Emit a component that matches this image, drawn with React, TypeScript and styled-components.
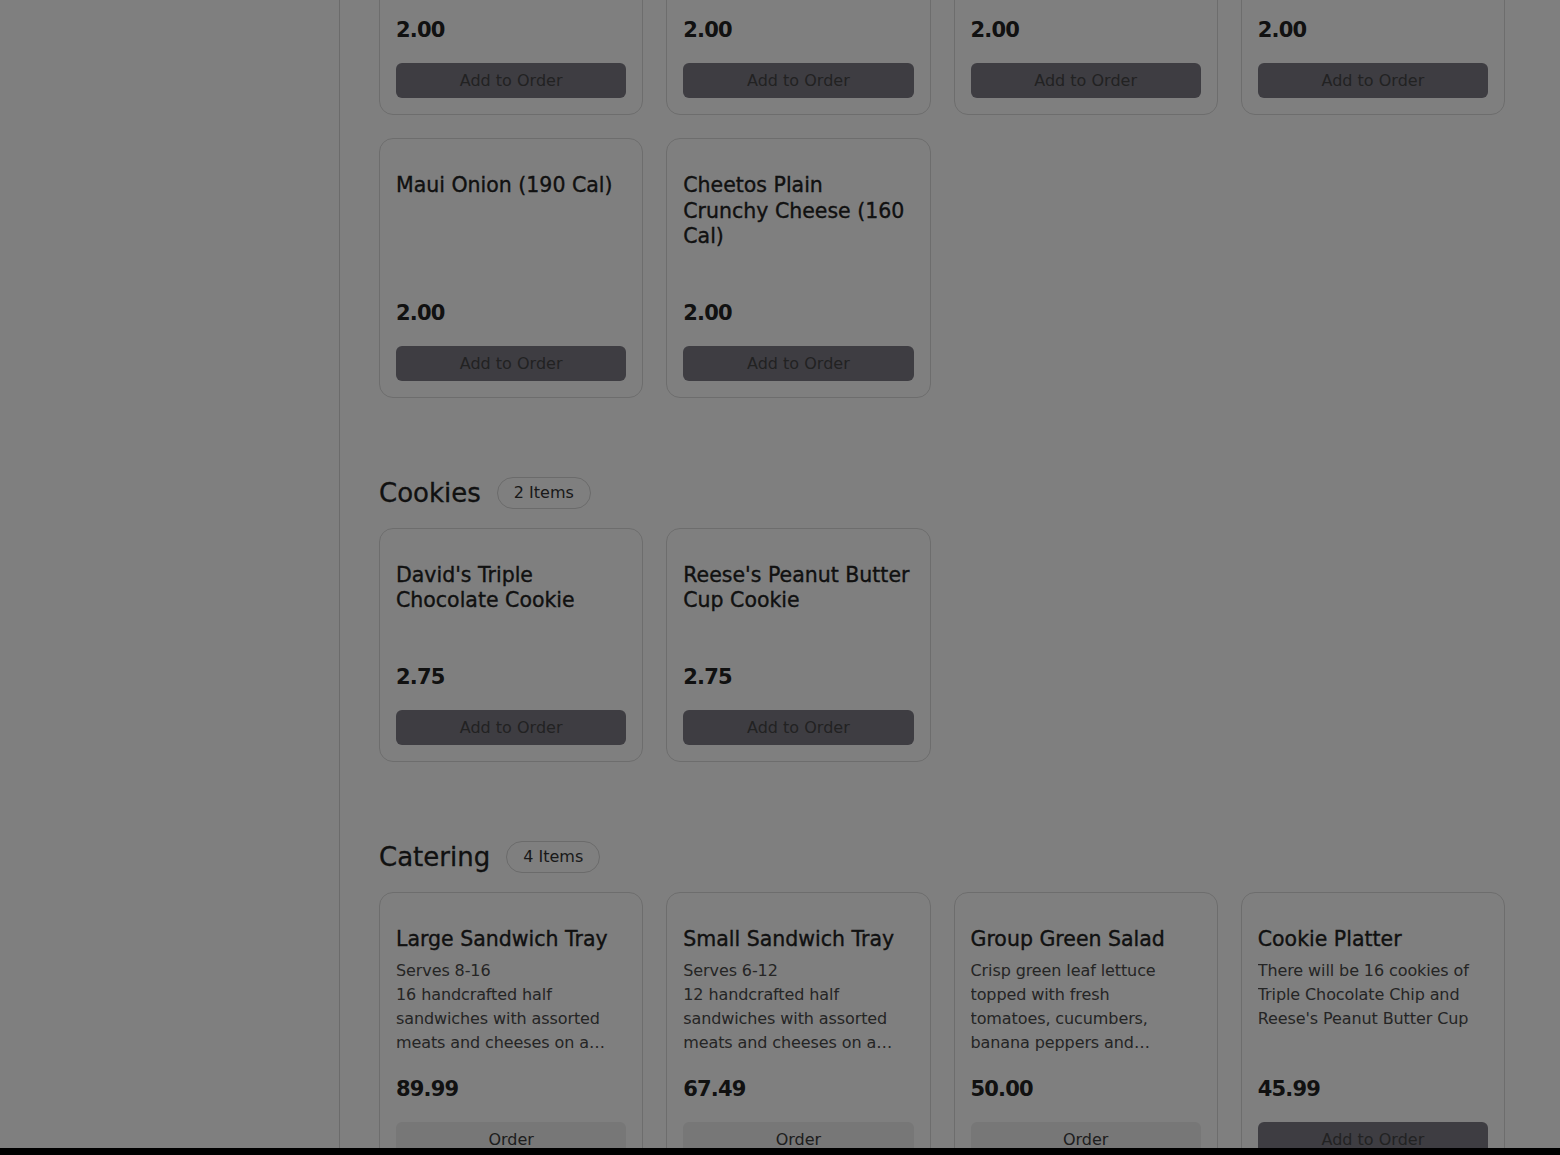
import React, { useLayoutEffect, useRef } from "react";
import styled, { createGlobalStyle } from "styled-components";

const Global = createGlobalStyle`
  html, body { margin: 0; padding: 0; height: 100%; overflow: hidden; }
  body { font-family: "DejaVu Sans", "Open Sans", sans-serif; background: #ffffff; color: #222222; }
  #root { height: 100%; }
  * { box-sizing: border-box; }
`;

const Shell = styled.div`
  display: flex;
  height: 100vh;
  background: #ffffff;
`;

const Sidebar = styled.aside`
  flex: 0 0 340px;
  border-right: 1px solid #d6d6d6;
  background: #ffffff;
`;

const Main = styled.main`
  flex: 1;
  overflow-y: auto;
  scrollbar-width: none;
  padding: 40px 55px 120px 39px;
  &::-webkit-scrollbar { display: none; }
`;

const Section = styled.section`
  display: flex;
  flex-direction: column;
  gap: 19px;
  & + & { margin-top: 79px; }
`;

const SectionHead = styled.div`
  display: flex;
  align-items: center;
  gap: 16px;
  height: 32px;
`;

const SectionTitle = styled.h2`
  margin: 0;
  font-size: 26px;
  font-weight: 500;
  color: #222222;
  -webkit-text-stroke: 0.3px #222222;
`;

const CountPill = styled.span`
  display: inline-flex;
  align-items: center;
  height: 32px;
  padding: 0 16px;
  border: 1px solid #d6d6d6;
  border-radius: 999px;
  font-size: 16px;
  color: #333333;
`;

const Grid = styled.div`
  display: grid;
  grid-template-columns: repeat(4, 1fr);
  gap: 23px;
`;

const Card = styled.article`
  display: flex;
  flex-direction: column;
  border: 1px solid #dadada;
  border-radius: 14px;
  padding: 34px 16px 16px;
  background: #ffffff;
`;

const ItemName = styled.h3`
  margin: 0;
  font-size: 20.5px;
  line-height: 25.5px;
  font-weight: 500;
  color: #222222;
  -webkit-text-stroke: 0.35px #222222;
`;

const Description = styled.p`
  margin: 7px 0 20px;
  min-height: 22px;
  font-size: 16px;
  line-height: 24px;
  color: #4a4a4a;
  white-space: pre-line;
  display: -webkit-box;
  -webkit-line-clamp: 4;
  -webkit-box-orient: vertical;
  overflow: hidden;
  letter-spacing: -0.1px;
`;

const Price = styled.div`
  margin-top: auto;
  font-size: 21px;
  line-height: 28px;
  font-weight: 600;
  color: #222222;
  letter-spacing: -0.8px;
`;

const OrderButton = styled.button<{ $variant: "add" | "order" }>`
  margin-top: 19px;
  height: 35px;
  width: 100%;
  border: none;
  border-radius: 6px;
  font-family: inherit;
  font-size: 16px;
  cursor: pointer;
  background: ${(p) => (p.$variant === "add" ? "#7c7a84" : "#eeeeee")};
  color: ${(p) => (p.$variant === "add" ? "#444444" : "#3c3c3c")};
`;

const Backdrop = styled.div`
  position: fixed;
  inset: 0;
  background: rgba(0, 0, 0, 0.5);
  pointer-events: none;
`;

const SheetEdge = styled.div`
  position: fixed;
  left: 0;
  right: 0;
  bottom: 0;
  height: 7px;
  background: #000000;
`;

type Item = { name: string; desc?: string; price: string; action?: "add" | "order" };

const snacks: Item[] = [
  { name: "Baked Lay's Original (130 Cal)", price: "2.00" },
  { name: "Doritos Nacho Cheese (150 Cal)", price: "2.00" },
  { name: "Lay's Classic (160 Cal)", price: "2.00" },
  { name: "Sun Chips Harvest Cheddar (140 Cal)", price: "2.00" },
  { name: "Maui Onion (190 Cal)", price: "2.00" },
  { name: "Cheetos Plain Crunchy Cheese (160 Cal)", price: "2.00" },
];

const cookies: Item[] = [
  { name: "David's Triple Chocolate Cookie", price: "2.75" },
  { name: "Reese's Peanut Butter Cup Cookie", price: "2.75" },
];

const catering: Item[] = [
  {
    name: "Large Sandwich Tray",
    desc: "Serves 8-16\n16 handcrafted half sandwiches with assorted meats and cheeses on a variety of breads",
    price: "89.99",
    action: "order",
  },
  {
    name: "Small Sandwich Tray",
    desc: "Serves 6-12\n12 handcrafted half sandwiches with assorted meats and cheeses on a variety of breads",
    price: "67.49",
    action: "order",
  },
  {
    name: "Group Green Salad",
    desc: "Crisp green leaf lettuce topped with fresh\ntomatoes, cucumbers,\nbanana peppers and croutons",
    price: "50.00",
    action: "order",
  },
  {
    name: "Cookie Platter",
    desc: "There will be 16 cookies of Triple Chocolate Chip and Reese's Peanut Butter Cup",
    price: "45.99",
    action: "add",
  },
];

function ItemCard({ item }: { item: Item }) {
  const action = item.action ?? "add";
  return (
    <Card>
      <ItemName>{item.name}</ItemName>
      <Description>{item.desc ?? ""}</Description>
      <Price>{item.price}</Price>
      <OrderButton $variant={action}>{action === "add" ? "Add to Order" : "Order"}</OrderButton>
    </Card>
  );
}

function MenuSection({
  title,
  items,
  anchorRef,
}: {
  title: string;
  items: Item[];
  anchorRef?: React.Ref<HTMLElement>;
}) {
  return (
    <Section ref={anchorRef}>
      <SectionHead>
        <SectionTitle>{title}</SectionTitle>
        <CountPill>{items.length} Items</CountPill>
      </SectionHead>
      <Grid>
        {items.map((it) => (
          <ItemCard key={it.name} item={it} />
        ))}
      </Grid>
    </Section>
  );
}

export default function App() {
  const mainRef = useRef<HTMLElement>(null);
  const cookiesRef = useRef<HTMLElement>(null);

  useLayoutEffect(() => {
    const main = mainRef.current;
    const anchor = cookiesRef.current;
    if (main && anchor) {
      main.scrollTop += anchor.getBoundingClientRect().top - 477;
    }
  }, []);

  return (
    <>
      <Global />
      <Shell>
        <Sidebar />
        <Main ref={mainRef}>
          <MenuSection title="Chips" items={snacks} />
          <MenuSection title="Cookies" items={cookies} anchorRef={cookiesRef} />
          <MenuSection title="Catering" items={catering} />
        </Main>
      </Shell>
      <Backdrop />
      <SheetEdge />
    </>
  );
}
